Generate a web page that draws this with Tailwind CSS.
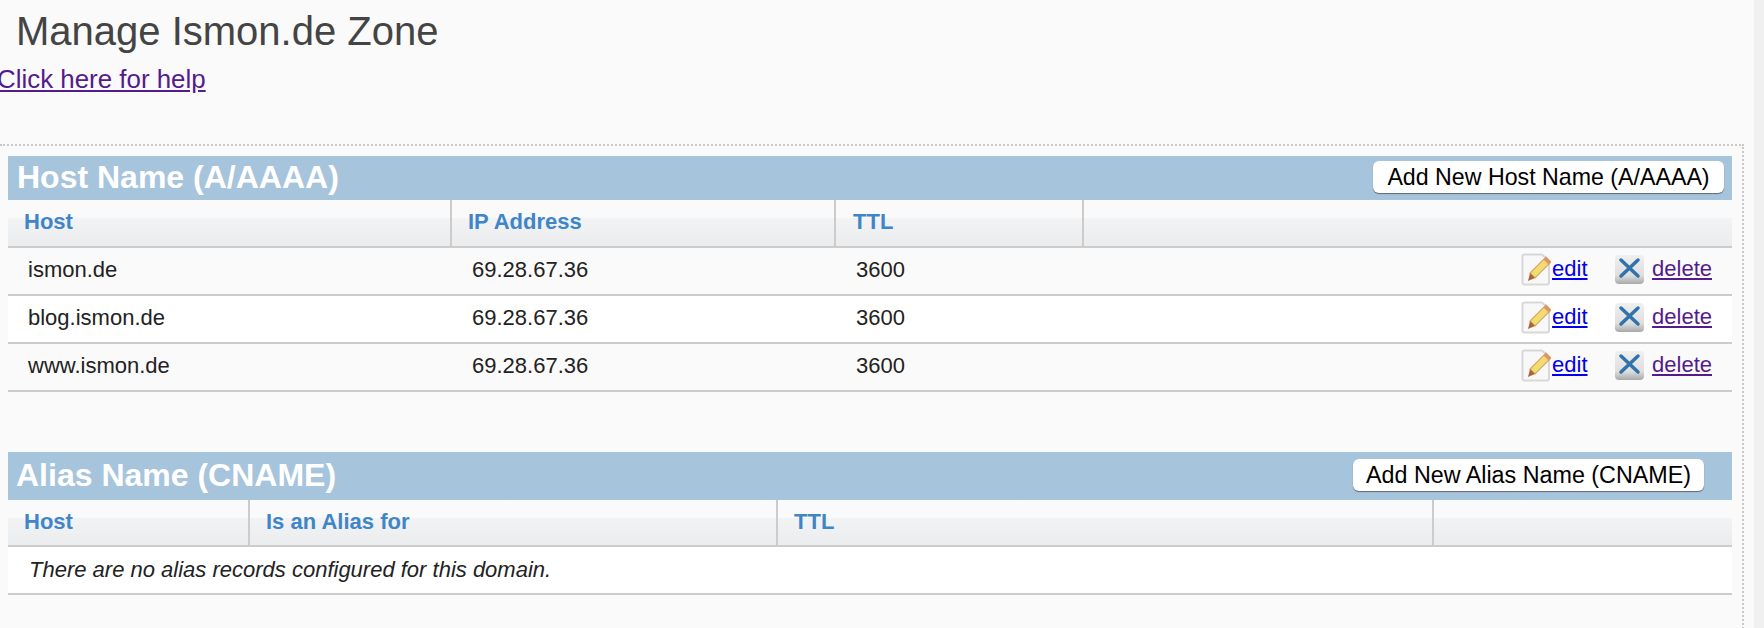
<!DOCTYPE html>
<html><head><meta charset="utf-8"><script src="https://cdn.jsdelivr.net/npm/@tailwindcss/browser@4"></script></head>
<body class="m-0 overflow-hidden">
<svg class="absolute h-0 w-0"><defs><linearGradient id="xbtn" x1="0" y1="0" x2="0" y2="1"><stop offset="0" stop-color="#f0f0f0"/><stop offset="0.7" stop-color="#dedede"/><stop offset="0.85" stop-color="#c4c4c4"/><stop offset="1" stop-color="#a8a8a8"/></linearGradient></defs></svg>
<div class="flex h-[628px] w-[1764px] overflow-hidden bg-[#fafafa] font-['Liberation_Sans',Arial,sans-serif] text-[22px] text-[#222]">
<main class="w-[1754px] shrink-0">
<h1 class="h-[60px] pl-[16px] pt-[8px] text-[40px] leading-[46px] font-normal text-[#444]">Manage Ismon.de Zone</h1>
<a href="#" class="ml-[-3px] block h-[84px] pt-[4px] text-[25.9px] leading-[30px] text-[#551a8b] underline">Click here for help</a>
<div class="w-[1744px] h-[500px] border-t-2 border-r-2 border-dotted border-[#c8c8c8] pl-[8px] pr-[10px] pt-[10px]">

<section class="h-[296px]">
<div class="flex h-[44px] items-center justify-between bg-[#a7c4dd] pb-[2px] pl-[9px] pr-[8px]">
<h2 class="text-[32px] leading-[38px] font-bold text-white">Host Name (A/AAAA)</h2>
<button class="h-[32px] w-[351px] rounded-[6px] bg-white text-[23.2px] leading-[30px] text-black shadow-[0_1px_1px_#667]">Add New Host Name (A/AAAA)</button>
</div>
<div class="grid h-[48px] grid-cols-[444px_384px_248px_1fr] border-b-2 border-[#ccc] bg-gradient-to-b from-[#fafafa] from-40% via-[#f2f3f5] via-40% to-[#ebecee] text-[#3f85c8] font-bold leading-[44px]">
<div class="border-r-2 border-[#ccc] pl-[16px]">Host</div>
<div class="border-r-2 border-[#ccc] pl-[16px]">IP Address</div>
<div class="border-r-2 border-[#ccc] pl-[17px]">TTL</div>
<div></div>
</div>

<div class="grid h-[48px] grid-cols-[444px_384px_248px_1fr] items-center border-b-2 border-[#ccc] pb-[4px]">
<div class="pl-[20px]">ismon.de</div><div class="pl-[20px]">69.28.67.36</div><div class="pl-[20px]">3600</div>
<div class="flex items-center justify-end pr-[20px]">
<svg class="h-[33px] w-[30px] blur-[0.4px]" viewBox="0 0 30 33"><path d="M1.500 3.500 Q1.500 1.500 3.500 1.500 H21 L28 8 V29.500 Q28 31.500 26 31.500 H3.500 Q1.500 31.500 1.500 29.500Z" fill="#f8f8f8" stroke="#d8d8d8" stroke-width="2"/><path d="M25 4 L30 9 L14 25 L9 20Z" fill="#f3dc72" stroke="#d8a868" stroke-width="1.200"/><path d="M9 20 L14 25 L7 28Z" fill="#a8683a"/><path d="M25 4 L30 9 L27.500 11.500 L22.500 6.500Z" fill="#d9976a"/></svg>
<a href="#" class="ml-px w-[36px] text-[#0000ee] underline leading-[26px]">edit</a>
<svg class="ml-[26px] h-[31px] w-[31px] blur-[0.6px]" viewBox="0 0 31 31"><rect x="1" y="1" width="29" height="29" rx="4" fill="url(#xbtn)"/><path d="M7 6 L24 22 M24 6 L7 22" stroke="#2f72ae" stroke-width="3.500" stroke-linecap="round"/></svg>
<a href="#" class="ml-[7px] text-[#551a8b] underline leading-[26px]">delete</a>
</div>
</div>

<div class="grid h-[48px] grid-cols-[444px_384px_248px_1fr] items-center border-b-2 border-[#ccc] bg-white pb-[4px]">
<div class="pl-[20px]">blog.ismon.de</div><div class="pl-[20px]">69.28.67.36</div><div class="pl-[20px]">3600</div>
<div class="flex items-center justify-end pr-[20px]">
<svg class="h-[33px] w-[30px] blur-[0.4px]" viewBox="0 0 30 33"><path d="M1.500 3.500 Q1.500 1.500 3.500 1.500 H21 L28 8 V29.500 Q28 31.500 26 31.500 H3.500 Q1.500 31.500 1.500 29.500Z" fill="#f8f8f8" stroke="#d8d8d8" stroke-width="2"/><path d="M25 4 L30 9 L14 25 L9 20Z" fill="#f3dc72" stroke="#d8a868" stroke-width="1.200"/><path d="M9 20 L14 25 L7 28Z" fill="#a8683a"/><path d="M25 4 L30 9 L27.500 11.500 L22.500 6.500Z" fill="#d9976a"/></svg>
<a href="#" class="ml-px w-[36px] text-[#0000ee] underline leading-[26px]">edit</a>
<svg class="ml-[26px] h-[31px] w-[31px] blur-[0.6px]" viewBox="0 0 31 31"><rect x="1" y="1" width="29" height="29" rx="4" fill="url(#xbtn)"/><path d="M7 6 L24 22 M24 6 L7 22" stroke="#2f72ae" stroke-width="3.500" stroke-linecap="round"/></svg>
<a href="#" class="ml-[7px] text-[#551a8b] underline leading-[26px]">delete</a>
</div>
</div>

<div class="grid h-[48px] grid-cols-[444px_384px_248px_1fr] items-center border-b-2 border-[#ccc] pb-[4px]">
<div class="pl-[20px]">www.ismon.de</div><div class="pl-[20px]">69.28.67.36</div><div class="pl-[20px]">3600</div>
<div class="flex items-center justify-end pr-[20px]">
<svg class="h-[33px] w-[30px] blur-[0.4px]" viewBox="0 0 30 33"><path d="M1.500 3.500 Q1.500 1.500 3.500 1.500 H21 L28 8 V29.500 Q28 31.500 26 31.500 H3.500 Q1.500 31.500 1.500 29.500Z" fill="#f8f8f8" stroke="#d8d8d8" stroke-width="2"/><path d="M25 4 L30 9 L14 25 L9 20Z" fill="#f3dc72" stroke="#d8a868" stroke-width="1.200"/><path d="M9 20 L14 25 L7 28Z" fill="#a8683a"/><path d="M25 4 L30 9 L27.500 11.500 L22.500 6.500Z" fill="#d9976a"/></svg>
<a href="#" class="ml-px w-[36px] text-[#0000ee] underline leading-[26px]">edit</a>
<svg class="ml-[26px] h-[31px] w-[31px] blur-[0.6px]" viewBox="0 0 31 31"><rect x="1" y="1" width="29" height="29" rx="4" fill="url(#xbtn)"/><path d="M7 6 L24 22 M24 6 L7 22" stroke="#2f72ae" stroke-width="3.500" stroke-linecap="round"/></svg>
<a href="#" class="ml-[7px] text-[#551a8b] underline leading-[26px]">delete</a>
</div>
</div>
</section>

<section>
<div class="flex h-[48px] items-center justify-between bg-[#a7c4dd] pb-[2px] pl-[8px] pr-[28px]">
<h2 class="text-[32px] leading-[38px] font-bold text-white">Alias Name (CNAME)</h2>
<button class="h-[32px] w-[351px] rounded-[6px] bg-white text-[23.3px] leading-[30px] text-black shadow-[0_1px_1px_#667]">Add New Alias Name (CNAME)</button>
</div>
<div class="grid h-[47px] grid-cols-[242px_528px_656px_1fr] border-b-2 border-[#ccc] bg-gradient-to-b from-[#fafafa] from-40% via-[#f2f3f5] via-40% to-[#ebecee] text-[#3f85c8] font-bold leading-[44px]">
<div class="border-r-2 border-[#ccc] pl-[16px]">Host</div>
<div class="border-r-2 border-[#ccc] pl-[16px]">Is an Alias for</div>
<div class="border-r-2 border-[#ccc] pl-[16px]">TTL</div>
<div></div>
</div>
<div class="flex h-[48px] items-center border-b-2 border-[#ccc] bg-white pb-[1px] pl-[21px] italic">There are no alias records configured for this domain.</div>
</section>
</div>
</main>
<div class="flex-1 bg-[#f0f0f0]"></div>
</div>
</body></html>
